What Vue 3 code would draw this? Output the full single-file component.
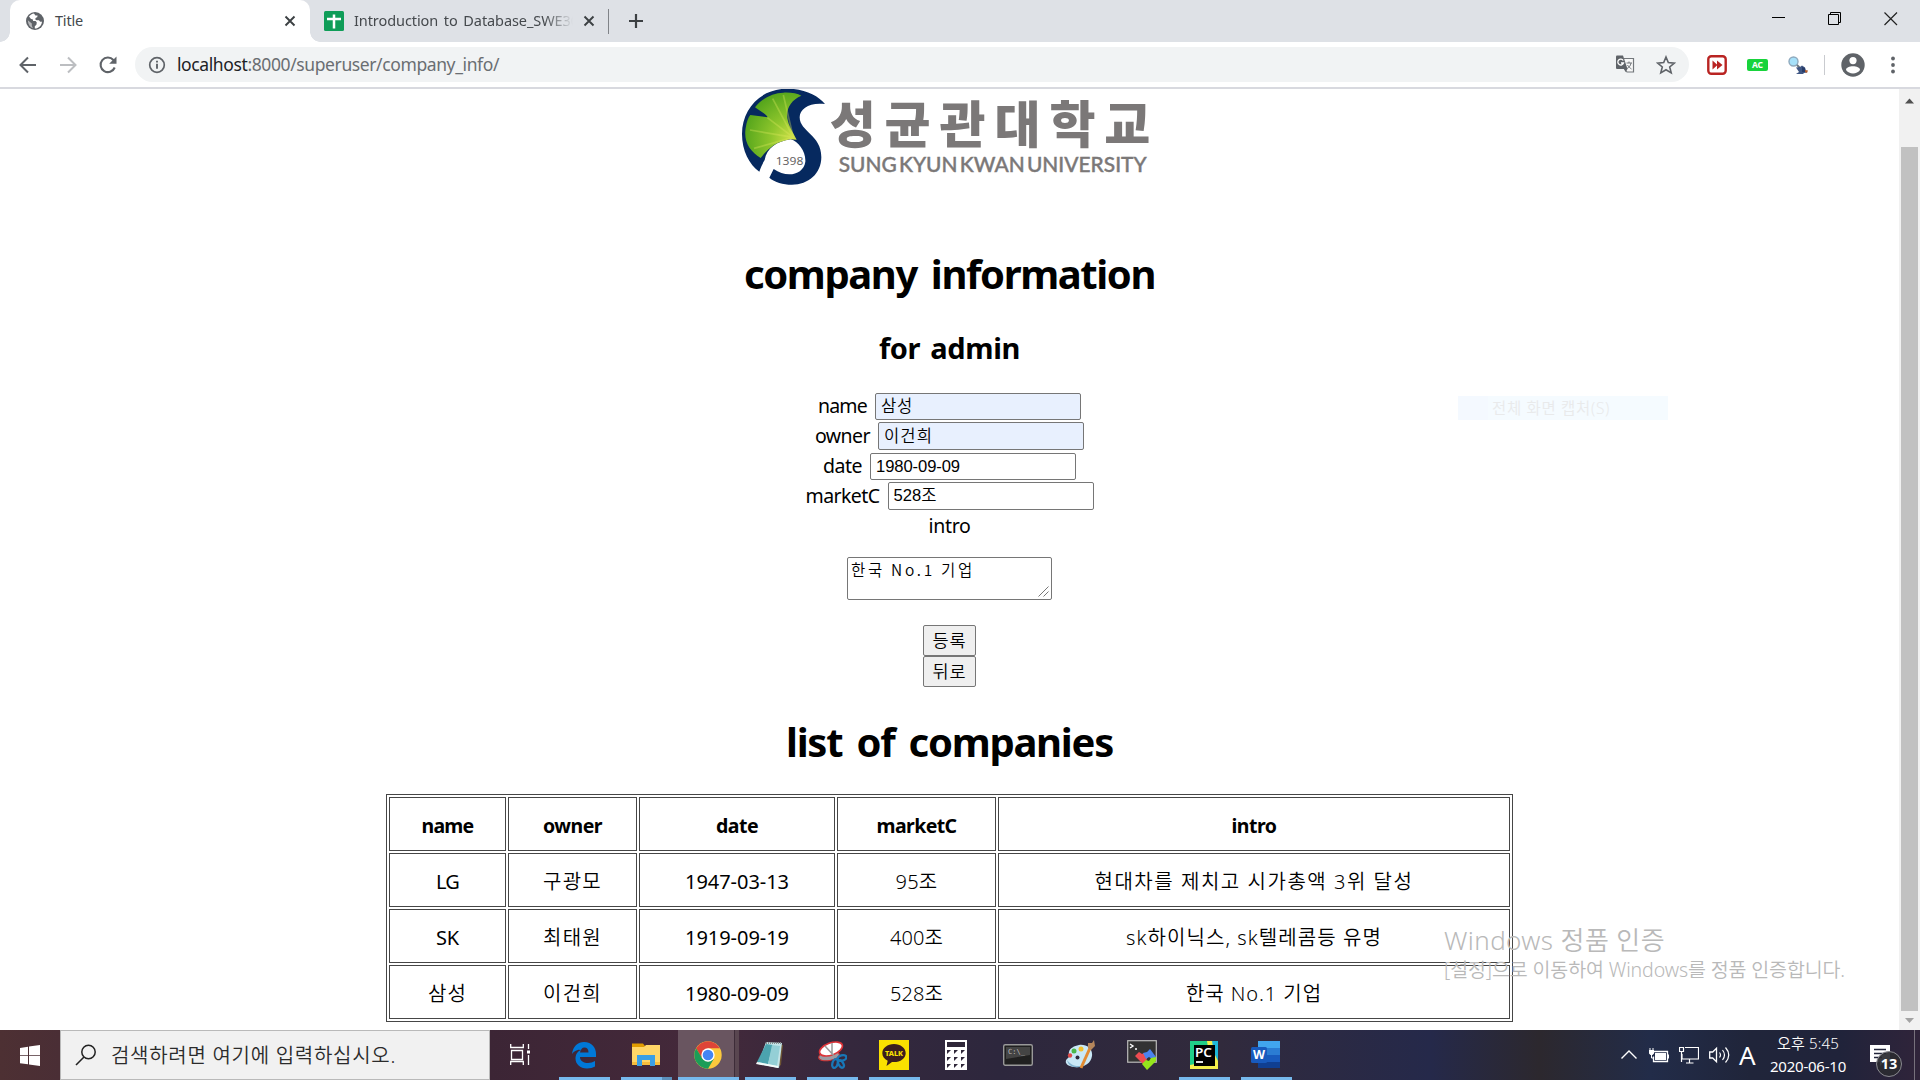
<script setup>
const vFit = {
  mounted(el, { value }) {
    if (/[가-힣]/.test(el.textContent)) el.style.fontWeight = 350
    const range = document.createRange()
    range.selectNodeContents(el)
    const natural = range.getBoundingClientRect().width
    const count = el.textContent.length
    el.style.letterSpacing = (value - natural) / count + 'px'
  }
}

const fields = [
  { label: 'name', value: '삼성', fill: true, w: 49, h: 27, mb: 2 },
  { label: 'owner', value: '이건희', fill: true, w: 55, h: 28, mb: 3 },
  { label: 'date', value: '1980-09-09', fill: false, w: 39, h: 27, mb: 2 },
  { label: 'marketC', value: '528조', fill: false, w: 74, h: 28, mb: 0 }
]
const valueWidths = [32, 49, 84, 43]

const heads = [['name', 52], ['owner', 59], ['date', 42], ['marketC', 80], ['intro', 45]]
const rows = [
  [['LG', 23], ['구광모', 59], ['1947-03-13', 104], ['95조', 42], ['현대차를 제치고 시가총액 3위 달성', 319]],
  [['SK', 23], ['최태원', 59], ['1919-09-19', 104], ['400조', 53], ['sk하이닉스, sk텔레콤등 유명', 256]],
  [['삼성', 39], ['이건희', 59], ['1980-09-09', 104], ['528조', 53], ['한국 No.1 기업', 136]]
]
</script>

<template>
  <div class="screen">
    <header class="tabs">
      <div class="tab active">
        <svg class="fav" width="20" height="20" viewBox="0 0 20 20"><circle cx="10" cy="10" r="9" fill="#5f6368"/><path d="M9 2.600c-2 .3-3.800 1.400-5 3L6 8l1.600.2.6 1.800h2.400l1.200 1.400-.4 2.400-1.600 1.400v2.400c4-.4 7-3.200 7.200-7.200-1.300.8-2.600 0-3-1.200-1.300-.2-3 .2-3.600-.8-.4-1.200.6-1.800 1.800-2.200l.4-1.800-2.200.2z" fill="#fff"/><path d="M2.800 9.300l4 3.300v2.200l1.200 2.400c-3-.9-5-3.600-5.200-7.900z" fill="#fff" opacity=".55"/></svg>
        <span class="tab-title" v-fit="28">Title</span>
        <svg class="close" width="12" height="12" viewBox="0 0 12 12"><path d="M1.500 1.500l9 9m0-9l-9 9" stroke="#3c4043" stroke-width="1.900"/></svg>
      </div>
      <div class="tab second">
        <svg class="sheet" width="20" height="20" viewBox="0 0 20 20"><rect width="20" height="20" rx="1.500" fill="#0f9d58"/><path d="M10 3.500v14M3 8h14" stroke="#fff" stroke-width="2.500"/></svg>
        <span class="tab-title long"><span v-fit="225">Introduction to Database_SWE30</span></span>
        <svg class="close" width="12" height="12" viewBox="0 0 12 12"><path d="M1.500 1.500l9 9m0-9l-9 9" stroke="#3c4043" stroke-width="1.900"/></svg>
      </div>
      <i class="tab-sep"></i>
      <svg class="plus" width="16" height="16" viewBox="0 0 16 16"><path d="M8 1v14M1 8h14" stroke="#3c4043" stroke-width="2.200"/></svg>
      <div class="win">
        <svg width="14" height="14" viewBox="0 0 14 14"><path d="M0 5.500h13" stroke="#000"/></svg>
        <svg width="14" height="14" viewBox="0 0 14 14"><path d="M.5 2.500h10v10h-10zM2.500 2.500v-2h10v10h-2" fill="none" stroke="#000"/></svg>
        <svg width="14" height="14" viewBox="0 0 14 14"><path d="M.5.500l12.500 12.500m0-12.500l-12.500 12.500" stroke="#222" stroke-width="1.200"/></svg>
      </div>
    </header>

    <div class="toolbar">
      <svg class="nav" width="20" height="20" viewBox="0 0 20 20"><path d="M18 10H3M10 2.500L2.500 10l7.500 7.500" fill="none" stroke="#5f6368" stroke-width="2"/></svg>
      <svg class="nav" width="20" height="20" viewBox="0 0 20 20"><path d="M2 10h15M10 2.500l7.500 7.500-7.500 7.500" fill="none" stroke="#bcbec1" stroke-width="2"/></svg>
      <svg class="nav" width="20" height="20" viewBox="0 0 20 20"><path d="M16.700 12.500a7.300 7.300 0 1 1-1.300-7.500l1.300 1.600" fill="none" stroke="#5f6368" stroke-width="2.100"/><path d="M18.500 1.500v7.300h-7.300z" fill="#5f6368"/></svg>
      <div class="omnibox">
        <svg class="info" width="18" height="18" viewBox="0 0 18 18"><circle cx="9" cy="9" r="7.300" fill="none" stroke="#5f6368" stroke-width="1.700"/><path d="M9 7.800v5M9 4.700v1.900" stroke="#5f6368" stroke-width="1.900"/></svg>
        <span class="url" v-fit="322"><b>localhost</b>:8000/superuser/company_info/</span>
        <svg class="trans" width="19" height="19" viewBox="0 0 19 19"><path d="M8 3.500h9.500v13.500H11L8 13" fill="#f8f8f8" stroke="#73777b" stroke-width="1.200"/><path d="M0 1.500Q0 .5 1 .5h6L11.500 14H1q-1 0-1-1z" fill="#5f6368"/><path d="M8 14h3.500L9.500 17z" fill="#5f6368"/><path d="M7.200 5.500A2.900 2.900 0 1 0 7.500 8H5" fill="none" stroke="#fff" stroke-width="1.300"/><path d="M10.500 8h5.500M13 6.500V8M15 8c-.5 3-2 4.500-4 5.500M11.500 10c.8 1.500 2.500 3 4 4" fill="none" stroke="#73777b"/></svg>
        <svg class="star" width="20" height="20" viewBox="0 0 20 20"><path d="M10 2l2.300 5.600 6 .5-4.600 3.900 1.500 5.900L10 14.700l-5.200 3.200L6.300 12 1.700 8.100l6-.5z" fill="none" stroke="#5f6368" stroke-width="1.600"/></svg>
      </div>
      <div class="exts">
        <svg width="20" height="20" viewBox="0 0 20 20"><rect x="1.300" y="1.300" width="17.400" height="17.400" rx="3" fill="#fff" stroke="#b92422" stroke-width="2.400"/><path d="M5.500 5.500l5 4.500-5 4.500zM10 5.500l5.500 4.500-5.500 4.500z" fill="#b92422"/></svg>
        <span class="ac">AC</span>
        <svg width="20" height="20" viewBox="0 0 20 20"><path d="M8 9l4 4" stroke="#69777f" stroke-width="2"/><circle cx="5.500" cy="6.500" r="4.500" fill="#a6e1fa" stroke="#8fa9bd" stroke-width="1.400"/><path d="M8 12.500l4-.5 2-1.500 3 2 1 3 1 2-3 .5-1 1H8l3-2z" fill="#405784"/><path d="M14 12l3 1v4h-3z" fill="#293d68"/><path d="M17 15l3 .5-1 2.500-2-1z" fill="#b45f2e"/></svg>
      </div>
      <i class="bar-sep"></i>
      <svg class="avatar" width="24" height="24" viewBox="0 0 24 24"><circle cx="12" cy="12" r="11.700" fill="#5f6368"/><circle cx="12" cy="7.600" r="3.600" fill="#fff"/><path d="M5 17c0-5 14-5 14 0-3 4.500-11 4.500-14 0z" fill="#fff"/></svg>
      <svg class="dots" width="6" height="18" viewBox="0 0 6 18"><g fill="#5f6368"><circle cx="3" cy="2.500" r="1.900"/><circle cx="3" cy="9" r="1.900"/><circle cx="3" cy="15.500" r="1.900"/></g></svg>
    </div>

    <div class="viewport">
      <main class="page">
        <svg class="logo" width="430" height="112" viewBox="0 27 1290 336">
          <defs><radialGradient id="leaf" gradientUnits="userSpaceOnUse" cx="190" cy="180" r="150"><stop offset="0" stop-color="#d3e24a"/><stop offset=".45" stop-color="#8fc62c"/><stop offset="1" stop-color="#55a51c"/></radialGradient></defs>
          <path d="M285 72C264 46 222 26 172 26 92 26 36 86 36 162c0 50 22 92 52 113 4-13 10-25 16-35 6-35 36-56 78-62 23 6 46 37 44 67-6 40-56 50-95 22l-13 26c17 14 40 21 68 21 49 0 88-33 88-83 0-66-65-76-65-119 0-27 31-46 76-40z" fill="#06295f"/>
          <path d="M75 82C95 56 130 38 160 38c22-1 42 2 54 9-30 13-46 37-42 66 3 25 18 45 28 66l-20-1c-40 6-64 26-88 56C60 215 40 185 47 144c3-19 8-32 14-39l52 7c-6-12-22-17-38-30z" fill="url(#leaf)"/>
          <g stroke="#dce95c" stroke-width="5" opacity=".35"><path d="M190 172L128 56M190 172L60 150M190 172L72 205M190 172L160 45M190 172L112 113"/></g>
          <text x="137" y="255" class="year" textLength="83" lengthAdjust="spacingAndGlyphs">1398</text>
          <text x="299" y="189" class="ko" textLength="962">성균관대학교</text>
          <text x="326" y="275" class="en" textLength="924" lengthAdjust="spacingAndGlyphs">SUNG KYUN KWAN UNIVERSITY</text>
        </svg>
        <h1 class="title"><span v-fit="411">company information</span></h1>
        <h2 class="sub"><span v-fit="141">for admin</span></h2>
        <form class="form" @submit.prevent>
          <div v-for="(f, i) in fields" :key="f.label" class="field" :style="{ height: f.h + 'px', marginBottom: f.mb + 'px' }">
            <label><span v-fit="f.w">{{ f.label }}</span></label>
            <div class="input" :class="{ filled: f.fill }"><span v-fit="valueWidths[i]">{{ f.value }}</span></div>
          </div>
          <div class="intro"><span v-fit="42">intro</span></div>
          <div class="area"><span v-fit="124">한국 No.1 기업</span>
            <svg class="grip" width="11" height="11" viewBox="0 0 11 11"><path d="M.5 10.500l10-10M5.500 10.500l5-5" stroke="#777"/></svg>
          </div>
          <div class="btn"><span v-fit="34">등록</span></div>
          <div class="btn"><span v-fit="34">뒤로</span></div>
        </form>
        <h1 class="title list"><span v-fit="327">list of companies</span></h1>
        <table>
          <colgroup><col class="c1"><col class="c2"><col class="c3"><col class="c4"><col class="c5"></colgroup>
          <tbody>
            <tr><th v-for="h in heads" :key="h[0]"><span v-fit="h[1]">{{ h[0] }}</span></th></tr>
            <tr v-for="r in rows" :key="r[0][0]"><td v-for="c in r" :key="c[0]"><span v-fit="c[1]">{{ c[0] }}</span></td></tr>
          </tbody>
        </table>
      </main>
      <aside class="scroll">
        <svg width="21" height="24" viewBox="0 0 21 24"><path d="M6 14.500L10.500 9.500 15 14.500z" fill="#505050"/></svg>
        <div class="thumb"></div>
        <svg width="21" height="19" viewBox="0 0 21 19"><path d="M6 7L10.500 12 15 7z" fill="#a3a3a3"/></svg>
      </aside>
      <div class="ghost"><span v-fit="118">전체 화면 캡처(S)</span></div>
      <div class="mark"><p class="m1"><span v-fit="221">Windows 정품 인증</span></p><p class="m2"><span v-fit="401">[설정]으로 이동하여 Windows를 정품 인증합니다.</span></p></div>
    </div>

    <footer class="taskbar">
      <div class="start"><svg width="20" height="21" viewBox="0 0 20 21"><path d="M0 3l8-1.200v8.400H0zM9 1.600L20 0v10.200H9zM0 11h8v8.300L0 18.200zM9 11h11v10L9 19.500z" fill="#fff"/></svg></div>
      <div class="search">
        <svg width="22" height="22" viewBox="0 0 22 22"><circle cx="13.500" cy="8" r="6.700" fill="none" stroke="#222" stroke-width="1.500"/><path d="M9 13L1 21" stroke="#222" stroke-width="1.600"/></svg>
        <span v-fit="285">검색하려면 여기에 입력하십시오.</span>
      </div>
      <div class="view"><svg width="21" height="21" viewBox="0 0 21 21"><path d="M1.500 6.500h11v9h-11zM.7 0v3.500h12.600V0M.7 21v-3.500h12.600V21M18.500 0v5M18.500 11v10" fill="none" stroke="#fff" stroke-width="1.300"/><path d="M17 6.500h3v3h-3z" fill="#fff"/></svg></div>
      <nav class="apps">
        <div class="app on"><svg width="30" height="30" viewBox="0 0 30 30"><path d="M3 14C4 6 9 2 15 2c8 0 12 6 12 12v3H11c0 4 4 6 8 6 2.500 0 5-.8 7-2v5.500c-2 1.300-5 2-8 2-7 0-11.500-4.500-11.500-10 0-4.500 2.500-7.500 6-9C8 9.500 5 11 3 14zm8-1.500h8.500C19.500 9 18 7.500 15.500 7.500c-2.500 0-4 2-4.500 5z" fill="#0078d7"/></svg></div>
        <div class="app on multi"><svg width="30" height="30" viewBox="0 0 30 30"><path d="M1 5V3.500h11l2 2.500v4H1z" fill="#e09c00"/><path d="M1 7h12l2-2h14v20H1z" fill="#ffd667"/><path d="M1 22h28v3H1z" fill="#f6bd3c"/><path d="M6 26V15h18v11h-5v-6h-8v6z" fill="#3a9fe5"/></svg></div>
        <div class="app on current"><svg width="30" height="30" viewBox="0 0 30 30"><circle cx="15" cy="15" r="13.700" fill="#fbc93d"/><path d="M3.140 8.150A13.700 13.700 0 0 1 26.860 8.150H15L9.100 18.500z" fill="#de4437"/><path d="M3.140 8.150A13.700 13.700 0 0 0 15 28.700L21 18.400 15 21.500 9 18z" fill="#1b9d58"/><circle cx="15" cy="15" r="6.700" fill="#fff"/><circle cx="15" cy="15" r="5.300" fill="#4285f4"/></svg></div>
        <div class="app on"><svg width="30" height="30" viewBox="0 0 30 30"><path d="M24 4l4 1-2 20-3 2z" fill="#6d5433"/><path d="M11 2l16 1-3 25-21-4z" fill="#c3e4e8"/><path d="M11 4l7 1-5 19-11-2z" fill="#4ba3ae"/><path d="M17 5l8 1-3 20-9-2z" fill="#94cfd6"/><path d="M2 22l21 4v2L1 24z" fill="#f4fbfb"/><path d="M11 3h16" stroke="#858c8c" stroke-width="2" stroke-dasharray="1 1"/></svg></div>
        <div class="app on"><svg width="30" height="30" viewBox="0 0 30 30"><ellipse cx="12" cy="16" rx="10.500" ry="4.500" transform="rotate(-10 12 16)" fill="#9d9ba2" stroke="#c33" /><ellipse cx="14" cy="9" rx="12" ry="6" transform="rotate(-20 14 9)" fill="#fff" stroke="#dc3338" stroke-width="1.600"/><path d="M8 6l11 12M15 3v12" stroke="#999" stroke-width="1.500"/><g fill="none" stroke="#1878b8" stroke-width="2.300"><ellipse cx="25" cy="18" rx="4.500" ry="2.700" transform="rotate(-15 25 18)"/><ellipse cx="18" cy="23.500" rx="2.600" ry="4.500" transform="rotate(15 18 23.500)"/><ellipse cx="24" cy="24" rx="2.300" ry="4" transform="rotate(-30 24 24)"/></g></svg></div>
        <div class="app on"><svg width="30" height="30" viewBox="0 0 30 30"><rect width="30" height="30" fill="#fae100"/><path d="M15 4c6.500 0 11.700 4 11.700 9.200S21.500 22 15 22l-2-.1L7.500 26l1.200-5.300C5.300 19 3.300 16.500 3.300 13.200 3.300 8 8.500 4 15 4z" fill="#3b1e1e"/><text x="6" y="16.300" class="talk" textLength="18" lengthAdjust="spacingAndGlyphs">TALK</text></svg></div>
        <div class="app"><svg width="30" height="30" viewBox="0 0 30 30"><path d="M4 0h22v30H4z" fill="#fff"/><path d="M6 2h18v5H6z" fill="#2f2739"/><g fill="#2f2739"><path v-for="n in 9" :key="n" :d="`M${6 + ((n - 1) % 3) * 7} ${10 + Math.floor((n - 1) / 3) * 7}h4l-4 4z`"/></g></svg></div>
        <div class="app"><svg width="30" height="30" viewBox="0 0 30 30"><rect x=".7" y="4.700" width="28.600" height="20.600" rx="1.500" fill="#202020" stroke="#999" stroke-width="1.400"/><path d="M3 7h24v8L3 19z" fill="#444"/><text x="5" y="14" class="cmd">C:\_</text></svg></div>
        <div class="app"><svg width="30" height="30" viewBox="0 0 30 30"><path d="M14 5C22 4 28 9 27 16c-1 8-9 12-18 11-7-1-11-5-6-9 3-2 0-3 1-6 1-4 5-6 10-7z" fill="#c9e8f6"/><path d="M2 20c4 6 12 8 19 4-3 4-17 6-19-4z" fill="#82b4d1"/><circle cx="12.500" cy="17.500" r="2" fill="#302a3c"/><circle cx="5" cy="15.500" r="2.200" fill="#dd4a47"/><circle cx="9" cy="11" r="2.500" fill="#4bb749"/><circle cx="16" cy="9" r="2.500" fill="#f2c12d"/><path d="M16 28l9-20" stroke="#e28b32" stroke-width="3"/><path d="M23 3l4 0 2-3 1 6-4 4-3-2z" fill="#b5865b"/></svg></div>
        <div class="app"><svg width="30" height="30" viewBox="0 0 30 30"><rect x=".7" y=".7" width="28.600" height="21.500" fill="#333" stroke="#bbb" stroke-width="1.200"/><path d="M3 4l3 2-3 2M8 9h2" fill="none" stroke="#fff" stroke-width="1.400"/><path d="M8 16l4-4 3 2 2-1 3 5-1 5-3 1z" fill="#ed4c51"/><path d="M16 13l4-1 3-3 3 4 3 4-4 2-3-2-3 2z" fill="#4a83ef"/><path d="M15 24l4-4 3 1 2-3 5-1v4l-9 9z" fill="#95e51c"/></svg></div>
        <div class="app on"><svg width="30" height="30" viewBox="0 0 30 30"><rect x="1" y="1" width="28" height="28" fill="#20cf89"/><path d="M18 1h11v28H1v-4l20-4z" fill="#f4ef4b"/><path d="M23 1h6v20l-4-8z" fill="#1db8da"/><path d="M5 5h21v21H5z" fill="#000"/><text x="6" y="17" class="pc" textLength="17" lengthAdjust="spacingAndGlyphs">PC</text><path d="M7 22h7" stroke="#fff" stroke-width="1.800"/></svg></div>
        <div class="app on"><svg width="30" height="30" viewBox="0 0 30 30"><path d="M7 1h22v7H7z" fill="#41a5ee"/><path d="M7 8h22v7H7z" fill="#2b7cd3"/><path d="M7 15h22v7H7z" fill="#185abd"/><path d="M7 22h22v6H7z" fill="#103f91"/><rect y="7" width="16" height="16" rx="1.500" fill="#185abd"/><text x="2" y="19.300" class="w" textLength="12" lengthAdjust="spacingAndGlyphs">W</text></svg></div>
      </nav>
      <div class="tray">
        <svg width="16" height="20" viewBox="0 0 16 20"><path d="M.5 13.500L8 6l7.500 7.500" fill="none" stroke="#fff" stroke-width="1.400"/></svg>
        <svg class="batt" width="20" height="20" viewBox="0 0 20 20"><path d="M4.500 6.500h14v10h-14v-5" fill="none" stroke="#fff" stroke-width="1.300"/><path d="M6 8h11v7H6zM19 9.500h1.300v4H19zM0 5h5v3.500L3.500 10h-2L0 8.500z" fill="#fff"/><path d="M1 3v3M4 3v3M2.500 9v4h2" fill="none" stroke="#fff"/></svg>
        <svg class="net" width="20" height="20" viewBox="0 0 20 20"><path d="M6 2.500h13.500v11.500H3V9M.5 2.500h4v4h-4zM2.500 6.500V17M10.500 14v4M7 18h7.500" fill="none" stroke="#fff" stroke-width="1.200"/></svg>
        <svg class="vol" width="21" height="20" viewBox="0 0 21 20"><path d="M.7 7h3L7.500 3.200v13.600L3.700 13h-3z" fill="none" stroke="#fff" stroke-width="1.300"/><path d="M10.500 7.500q2 2.500 0 5M13.500 5q4 5 0 10M16.500 2.500q6.500 7.500 0 15" fill="none" stroke="#fff" stroke-width="1.200"/></svg>
        <span class="ime">A</span>
        <div class="clock"><p><span v-fit="62">오후 5:45</span></p><p><span v-fit="76">2020-06-10</span></p></div>
        <div class="note">
          <svg width="20" height="22" viewBox="0 0 20 22"><path d="M0 0h20v17h-6l-4 4v-4H0z" fill="#fff"/><path d="M4 4.500h12M4 8.500h12M4 12.500h8" stroke="#22243a" stroke-width="1.300"/></svg>
          <b class="badge">13</b>
        </div>
      </div>
    </footer>
  </div>
</template>

<style>
body { margin: 0; overflow: hidden; }
</style>
<style scoped>
* { box-sizing: border-box; }
p, h1, h2 { margin: 0; }
svg { display: block; flex: none; }
.screen { width: 1920px; height: 1080px; display: flex; flex-direction: column; background: #fff; color: #000; font-family: "Noto Sans", "Noto Sans CJK KR", sans-serif; font-size: 20px; white-space: nowrap; overflow: hidden; }
.tabs { height: 42px; flex: none; background: #dee1e6; display: flex; align-items: center; padding-left: 10px; }
.tab { display: flex; align-items: center; height: 42px; color: #45494d; font-size: 14.500px; }
.active { width: 300px; background: #fff; border-radius: 10px 10px 0 0; padding-left: 15px; position: relative; }
.active::before, .active::after { content: ""; position: absolute; bottom: 0; width: 10px; height: 10px; }
.active::before { left: -10px; background: radial-gradient(circle at 0 0, transparent 9.500px, #fff 10px); }
.active::after { right: -10px; background: radial-gradient(circle at 100% 0, transparent 9.500px, #fff 10px); }
.tab-title { margin-left: 10px; line-height: 22px; padding-bottom: 2px; }
.close { margin-left: auto; margin-right: 14px; }
.second { width: 298px; padding-left: 14px; }
.long { width: 219px; overflow: hidden; word-spacing: 2px; -webkit-mask-image: linear-gradient(90deg, #000 190px, transparent 219px); mask-image: linear-gradient(90deg, #000 190px, transparent 219px); }
.second .close { margin-right: 13px; }
.tab-sep { width: 1px; height: 25px; background: #808388; }
.plus { margin-left: 19px; }
.win { margin-left: auto; display: flex; gap: 42px; padding-right: 22px; align-self: flex-start; padding-top: 12px; }
.toolbar { height: 47px; flex: none; display: flex; align-items: center; border-bottom: 2px solid #d8d9df; padding-left: 18px; }
.nav { margin-right: 20px; }
.omnibox { width: 1554px; height: 35px; border-radius: 18px; background: #f1f3f4; display: flex; align-items: center; padding: 0 13px; margin-left: -3px; }
.url { color: #6a6e72; font-size: 17.500px; margin-left: 11px; line-height: 30px; padding-bottom: 1px; }
.url b { font-weight: 400; color: #202124; }
.trans { margin-left: auto; margin-right: 21px; }
.star { margin-right: 0; }
.exts { display: flex; align-items: center; margin-left: 18px; gap: 20px; }
.ac { width: 21px; height: 12px; background: #18d33c; border-radius: 2px; color: #fff; font: bold 8.500px/12px "Noto Sans", sans-serif; text-align: center; }
.bar-sep { width: 1px; height: 20px; background: #c9cbcf; margin-left: 16px; }
.avatar { margin-left: 16px; }
.dots { margin-left: 25px; }
.viewport { flex: 1; min-height: 0; display: flex; position: relative; }
.page { width: 1899px; display: flex; flex-direction: column; align-items: center; }
.logo { margin-right: 9px; }
.year { font: 33px "Noto Sans", sans-serif; fill: #686666; }
.ko { font: 900 150px "Noto Sans CJK KR", sans-serif; fill: #7b7878; }
.en { font: 500 62px Lato, sans-serif; fill: #7b7878; stroke: #7b7878; stroke-width: 1.200; word-spacing: -9px; }
.title { font-size: 40px; font-weight: 700; height: 60px; line-height: 60px; margin-top: 43px; word-spacing: 5px; }
.sub { font-size: 29px; line-height: 40px; margin-top: 24px; word-spacing: 3px; }
.form { display: flex; flex-direction: column; align-items: center; margin-top: 25px; }
.field { display: flex; gap: 8px; align-items: center; }
.field label { line-height: 26px; font-size: 19.500px; padding-bottom: 1px; }
.input { width: 206px; height: 100%; border: 1px solid #767676; border-radius: 2px; display: flex; align-items: center; padding-left: 5px; font-family: "Liberation Sans", "Noto Sans CJK KR", sans-serif; font-size: 16.600px; line-height: 24px; overflow: hidden; }
.filled { background: #e8f0fe; }
.filled span { padding-top: 1px; }
.intro { height: 30px; line-height: 31px; font-size: 19.500px; }
.area { width: 205px; height: 43px; border: 1px solid #767676; border-radius: 2px; margin-top: 17px; margin-bottom: 25px; padding: 0 3px; font-family: "Noto Sans CJK KR", monospace; font-size: 15.500px; line-height: 22px; position: relative; }
.grip { position: absolute; right: 2px; bottom: 2px; }
.btn { width: 53px; height: 31px; border: 1px solid #767676; border-radius: 2px; background: #efefef; text-align: center; font-size: 17.500px; line-height: 29px; }
.list { margin-top: 25px; }
table { width: 1127px; margin-top: 22px; table-layout: fixed; border: 1px solid #464646; border-collapse: separate; border-spacing: 2px; }
th, td { height: 54px; padding: 4px 0 0; border: 1px solid #464646; text-align: center; line-height: 28px; font-size: 19.500px; }
td { font-size: 20px; }
.c1 { width: 117px; } .c2 { width: 129px; } .c3 { width: 196px; } .c4 { width: 159px; } .c5 { width: 512px; }
.scroll { width: 21px; background: #f1f1f1; display: flex; flex-direction: column; }
.thumb { width: 17px; margin: 34px 2px 0; flex: 1; background: #c1c1c1; }
.ghost { position: absolute; left: 1458px; top: 307px; width: 210px; height: 24px; background: linear-gradient(90deg, #f4f9ff 30px, #f5fbff 30px); color: #e9eaeb; font-size: 15.500px; line-height: 24px; padding-left: 34px; }
.mark { position: absolute; left: 1444px; top: 833px; color: #b9b9b9; }
.m1 { font-size: 26px; line-height: 36px; }
.m2 { font-size: 19.500px; line-height: 24px; }
.taskbar { height: 50px; flex: none; display: flex; color: #fff; background: linear-gradient(90deg, #4d3033 0, #4a2e35 60px, #3c2535 490px, #44293a 700px, #35283d 850px, #2d273d 1000px, #312a3c 1220px, #25294a 1430px, #2c282e 1540px, #222c49 1650px, #20253a 1750px, #20233a 1840px, #30243a 1920px); }
.start { width: 60px; padding: 15px 0 0 20px; }
.search { width: 430px; background: #f1f1f1; border: 1px solid #b9b9b9; display: flex; align-items: center; padding-left: 14px; gap: 14px; color: #2b2b2b; font-size: 20px; }
.search span { padding-bottom: 2px; }
.view { width: 64px; padding: 14px 0 0 20px; }
.apps { display: flex; }
.app { width: 62px; padding: 10px 0 0 15px; position: relative; }
.app.on::after { content: ""; position: absolute; left: 5px; bottom: 0; width: 51px; height: 3px; background: #76b9ed; }
.app.multi::after { background: linear-gradient(90deg, #76b9ed 41px, #5b8fbb 41px); }
.app.current::before { content: ""; position: absolute; left: 0; top: 0; width: 61px; height: 50px; background: linear-gradient(90deg, #695560 56px, #3d2c38 56px, #3d2c38 57px, #594650 57px); }
.app.current::after { left: 0; width: 61px; }
.app svg { position: relative; }
.talk { font: 800 7.500px "Noto Sans", sans-serif; fill: #fae100; }
.cmd { font: 7px "DejaVu Sans Mono", monospace; fill: #bbb; }
.pc { font: 600 13px "Noto Sans", sans-serif; fill: #fff; }
.w { font: bold 13px "Noto Sans", sans-serif; fill: #fff; }
.tray { margin-left: auto; display: flex; align-items: center; width: 299px; height: 50px; }
.batt { margin-left: 12px; } .net { margin-left: 10px; } .vol { margin-left: 10px; }
.ime { width: 17px; margin-left: 9px; font-size: 26px; line-height: 48px; }
.clock { width: 86px; margin-left: 9px; text-align: center; font-size: 15px; line-height: 23px; padding-bottom: 1px; }
.note { margin-left: 19px; width: 45px; height: 50px; border-right: 1px solid #77717c; padding-top: 15px; position: relative; }
.badge { position: absolute; left: 6px; top: 21px; width: 26px; height: 26px; border-radius: 50%; border: 1px solid #8b8b91; background: #2b2b30ee; font-size: 14.500px; line-height: 22px; text-align: center; }
</style>
